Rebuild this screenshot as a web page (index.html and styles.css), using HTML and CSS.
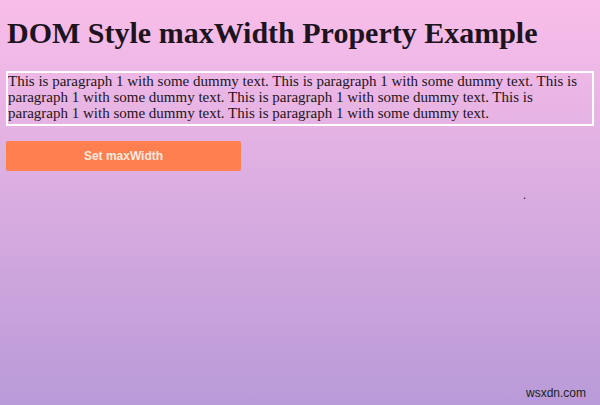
FILE: index.html
```html
<!DOCTYPE html>
<html>
<head>
<meta charset="utf-8">
<link rel="stylesheet" href="styles.css">
</head>
<body>
<h1 class="title">DOM Style maxWidth Property Example</h1>
<div class="para">This is paragraph 1 with some dummy text. This is paragraph 1 with some dummy text. This is paragraph 1 with some dummy text. This is paragraph 1 with some dummy text. This is paragraph 1 with some dummy text. This is paragraph 1 with some dummy text.</div>
<button class="btn">Set maxWidth</button>
<p class="out">.</p>
<span class="mark">wsxdn.com</span>
</body>
</html>
```
FILE: styles.css
```css
html, body {
  height: 100%;
}
body {
  margin: 0;
  padding: 0 6px;
  box-sizing: border-box;
  background: linear-gradient(to bottom, #f9bee9, #b99ad8);
  font-family: "Liberation Serif", "Times New Roman", serif;
  color: #1e1420;
  position: relative;
  overflow: hidden;
}
.title {
  font-size: 30px;
  font-weight: bold;
  margin: 0;
  padding: 16px 0 0 1px;
  line-height: 34px;
}
.para {
  margin-top: 21px;
  border: 2px solid #fff;
  font-size: 15px;
  line-height: 16px;
  padding: 0 0 3px 0;
}
.btn {
  display: block;
  margin-top: 15px;
  width: 235px;
  height: 30px;
  background: #ff7f50;
  border: none;
  border-radius: 2px;
  color: #fbe9dc;
  font-family: "Liberation Sans", Arial, sans-serif;
  font-weight: bold;
  font-size: 12px;
}
.out {
  margin: 17px 0 0 517px;
  font-size: 12px;
  line-height: 14px;
}
.mark {
  position: absolute;
  right: 14px;
  bottom: 5px;
  font-family: "Liberation Sans", Arial, sans-serif;
  font-size: 12px;
  color: #222;
}
```
